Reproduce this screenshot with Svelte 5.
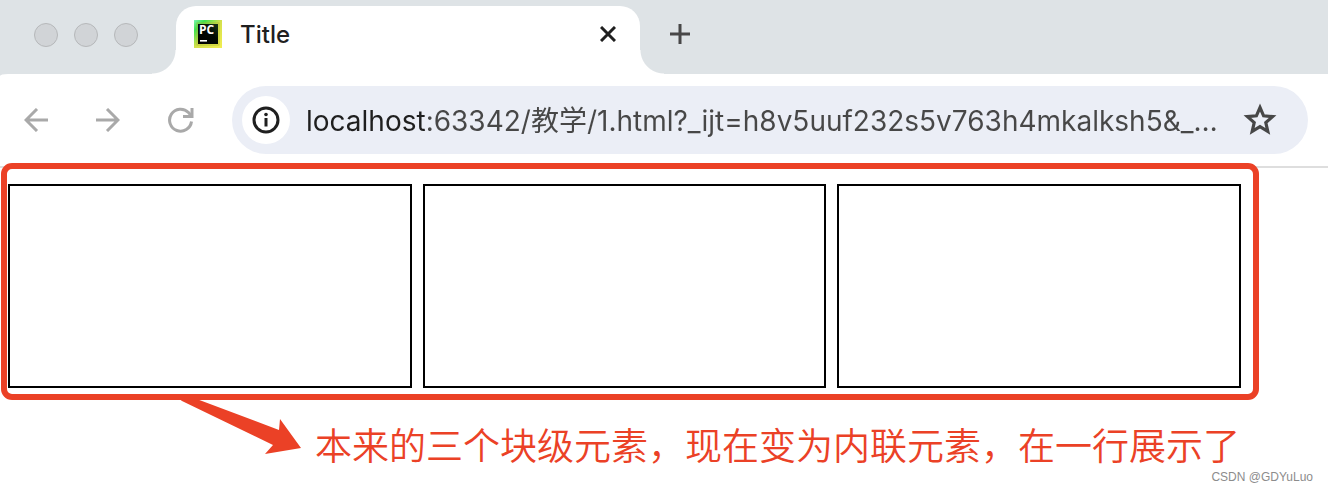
<script>
    let address = $state("localhost:63342/教学/1.html?_ijt=h8v5uuf232s5v763h4mkalksh5&_…");

    const windowButtons = ["Close window", "Minimize window", "Zoom window"];
    const boxes = [1, 2, 3];
</script>

<div class="browser">
    <header class="tab-strip">
        <div class="window-buttons">
            {#each windowButtons as label}
                <button class="dot" aria-label={label}></button>
            {/each}
        </div>

        <div class="tab">
            <svg class="favicon" viewBox="0 0 28 28" aria-hidden="true">
                <defs>
                    <linearGradient id="frame" x1="0" y1="0" x2="1" y2="1">
                        <stop offset="0" stop-color="#7df5b0" />
                        <stop offset="0.2" stop-color="#3fe04f" />
                        <stop offset="0.5" stop-color="#d3e04c" />
                        <stop offset="1" stop-color="#f2ee50" />
                    </linearGradient>
                    <linearGradient id="screen" x1="0" y1="1" x2="1" y2="0">
                        <stop offset="0" stop-color="#000" />
                        <stop offset="0.6" stop-color="#020a03" />
                        <stop offset="1" stop-color="#17351a" />
                    </linearGradient>
                </defs>
                <rect width="28" height="28" fill="url(#frame)" />
                <rect x="3" y="3" width="22" height="22" fill="none" stroke="#a8b52c" stroke-opacity="0.6" />
                <rect x="4" y="4" width="20" height="20" fill="url(#screen)" />
                <text x="5" y="14" fill="#fff" font-family="Open Sans, sans-serif" font-size="12" font-weight="700">PC</text>
                <rect x="6" y="20" width="7" height="1.6" fill="#fff" />
            </svg>
            <span class="tab-title">Title</span>
            <button class="icon-button close" aria-label="Close tab">
                <svg viewBox="0 0 16 16" width="16" height="16">
                    <path d="M1 1 15 15M15 1 1 15" stroke="#1f1f1f" stroke-width="3" />
                </svg>
            </button>
        </div>

        <button class="icon-button new-tab" aria-label="New tab">
            <svg viewBox="0 0 20 20" width="20" height="20">
                <path d="M10 0V20M0 10H20" stroke="#474747" stroke-width="3" />
            </svg>
        </button>
    </header>

    <nav class="toolbar">
        <div class="nav-buttons">
            <button class="icon-button" aria-label="Back">
                <svg viewBox="0 0 24 24" width="24" height="24">
                    <path d="M24 12H2M13 1 2 12 13 23" fill="none" stroke="#a9a9a9" stroke-width="3" />
                </svg>
            </button>
            <button class="icon-button" aria-label="Forward">
                <svg viewBox="0 0 24 24" width="24" height="24">
                    <path d="M0 12H22M11 1 22 12 11 23" fill="none" stroke="#a9a9a9" stroke-width="3" />
                </svg>
            </button>
            <button class="icon-button" aria-label="Reload">
                <svg viewBox="0 0 26 26" width="26" height="26">
                    <path d="M23.5 14.5A11 11 0 1 1 20.5 5.5L24 9.5" fill="none" stroke="#a9a9a9" stroke-width="3" />
                    <path d="M24 1V9.5H15" fill="none" stroke="#a9a9a9" stroke-width="3" />
                </svg>
            </button>
        </div>

        <div class="address-bar">
            <button class="icon-button site-info" aria-label="Site information">
                <svg viewBox="0 0 28 28" width="28" height="28">
                    <circle cx="14" cy="14" r="12" fill="none" stroke="#1f1f1f" stroke-width="3" />
                    <circle cx="14" cy="8.5" r="1.8" fill="#1f1f1f" />
                    <path d="M14 12V20.5" stroke="#1f1f1f" stroke-width="3" />
                </svg>
            </button>
            <input type="text" aria-label="Address" spellcheck="false" bind:value={address} />
            <button class="icon-button" aria-label="Bookmark this page">
                <svg viewBox="0 0 34 34" width="34" height="34">
                    <path
                        d="M17 4.5 20.6 12.8 29.6 13.6 22.8 19.6 24.8 28.4 17 23.7 9.2 28.4 11.2 19.6 4.4 13.6 13.4 12.8Z"
                        fill="none"
                        stroke="#474747"
                        stroke-width="3.2"
                    />
                </svg>
            </button>
        </div>
    </nav>

    <main>
        <div class="frame">
            {#each boxes as box (box)}
                <div class="box"></div>
            {/each}
        </div>

        <div class="note">
            <svg class="arrow" viewBox="0 0 124 56" width="124" height="56" aria-hidden="true">
                <path d="M0 0H16L101 32 102 21 123 50 87 56 95 47 4 3Z" fill="#eb4126" />
            </svg>
            <p>本来的三个块级元素，现在变为内联元素，在一行展示了</p>
        </div>
    </main>

    <footer>CSDN @GDYuLuo</footer>
</div>

<style>
    :global(body) {
        margin: 0;
        background: #fff;
    }

    .browser {
        font-family: Inter, "Noto Sans CJK SC", sans-serif;
        background: #dee3e6;
    }

    button {
        padding: 0;
        border: none;
        background: none;
    }

    .icon-button {
        display: flex;
        align-items: center;
        justify-content: center;
        flex: none;
    }

    .tab-strip {
        display: flex;
        align-items: center;
        height: 74px;
    }

    .window-buttons {
        display: flex;
        gap: 16px;
        padding: 0 38px 4px 34px;
    }

    .dot {
        box-sizing: border-box;
        width: 24px;
        height: 24px;
        border: 1px solid #b6b8ba;
        border-radius: 50%;
        background: #d1d4d7;
    }

    .tab {
        position: relative;
        display: flex;
        align-items: center;
        align-self: flex-end;
        box-sizing: border-box;
        width: 464px;
        height: 68px;
        padding: 0 24px 12px 18px;
        border-radius: 20px 20px 0 0;
        background: #fff;
    }

    /* curved feet of the active tab */
    .tab::before,
    .tab::after {
        content: "";
        position: absolute;
        bottom: 0;
        width: 24px;
        height: 24px;
    }

    .tab::before {
        right: 100%;
        background: radial-gradient(circle at 0 0, transparent 23px, #fff 24px);
    }

    .tab::after {
        left: 100%;
        background: radial-gradient(circle at 100% 0, transparent 23px, #fff 24px);
    }

    .favicon {
        width: 28px;
        height: 28px;
    }

    .tab-title {
        flex: 1;
        margin-left: 18px;
        font-size: 24px;
        font-weight: 500;
        color: #1f1f1f;
    }

    .new-tab {
        margin: 0 0 6px 30px;
    }

    .toolbar {
        display: flex;
        align-items: center;
        box-sizing: border-box;
        height: 94px;
        padding: 0 20px 0 24px;
        border-bottom: 2px solid #dedede;
        border-top-left-radius: 8px 2px;
        background: #fff;
    }

    .nav-buttons {
        display: flex;
        gap: 48px;
        margin-right: 38px;
    }

    .address-bar {
        display: flex;
        align-items: center;
        flex: 1;
        box-sizing: border-box;
        height: 68px;
        min-width: 0;
        padding: 0 31px 0 10px;
        border-radius: 34px;
        background: #ebeef6;
    }

    .site-info {
        width: 48px;
        height: 48px;
        border-radius: 50%;
        background: #fff;
    }

    /* the host name is darker than the rest of the address */
    .address-bar input {
        flex: 1;
        min-width: 0;
        height: 48px;
        margin: 0 12px 0 16px;
        padding: 0 0 3px;
        border: none;
        outline: none;
        background: linear-gradient(to right, #1f1f1f 120px, #474747 120px);
        background-clip: text;
        color: transparent;
        caret-color: #1f1f1f;
        font-family: inherit;
        font-size: 28px;
        text-overflow: ellipsis;
    }

    main {
        background: #fff;
    }

    .frame {
        position: relative;
        display: flex;
        gap: 11px;
        margin: 0 69px 0 1px;
        padding: 15px 12px 6px 1px;
        border: 6px solid #eb4126;
        border-radius: 11px;
        top: -5px;
    }

    .box {
        flex: 1;
        box-sizing: border-box;
        height: 204px;
        border: 2px solid #000;
    }

    .note {
        display: flex;
        margin: -7px 0 0 178px;
    }

    .arrow {
        flex: none;
    }

    .note p {
        margin: 24px 0 0 13px;
        font-family: "Noto Sans CJK SC", sans-serif;
        font-size: 37px;
        font-weight: 350;
        line-height: 44px;
        white-space: nowrap;
        color: #eb4126;
    }

    footer {
        padding: 4px 15px 6px;
        background: #fff;
        font-family: "Liberation Sans", sans-serif;
        font-size: 12px;
        line-height: 14px;
        text-align: right;
        color: #8c8c8c;
    }
</style>
